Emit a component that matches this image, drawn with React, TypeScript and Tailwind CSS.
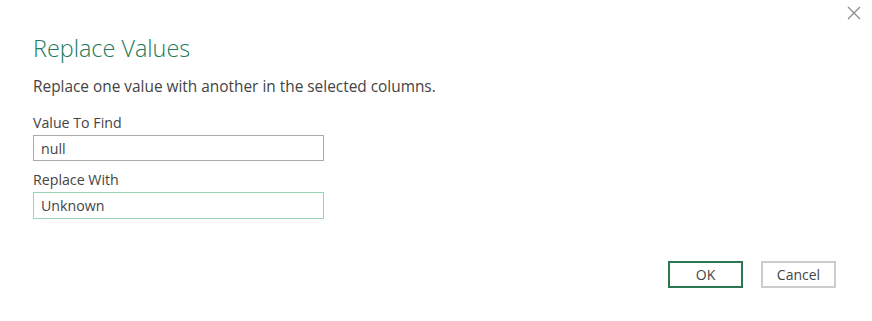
export default function App() {
  return (
    <div className="relative flex h-[321px] w-[872px] flex-col bg-white font-['Open_Sans',sans-serif] text-[#444444]">
      <button className="absolute right-[11px] top-[6px] flex h-[14px] w-[14px] items-center justify-center">
        <svg width="14" height="14" viewBox="0 0 14 14" fill="none" stroke="#8a8a8a" strokeWidth="1.2">
          <path d="M1 1 L13 13 M13 1 L1 13" />
        </svg>
      </button>

      <div className="flex flex-col pl-[33px] pt-[33px]">
        <h1 className="text-[23.4px] font-light leading-[30px] text-[#217a5a]">Replace Values</h1>
        <p className="mt-[14px] text-[15.4px] leading-[20px]">
          Replace one value with another in the selected columns.
        </p>

        <label className="mt-[16px] text-[14.2px] leading-[20px]">Value To Find</label>
        <input
          readOnly
          value="null"
          className="mt-[2px] h-[26px] w-[291px] border border-[#ababab] px-[7px] text-[14.2px] text-[#444444] outline-none"
        />
        <label className="mt-[9px] text-[14.2px] leading-[20px]">Replace With</label>
        <input
          readOnly
          value="Unknown"
          className="mt-[2px] h-[27px] w-[291px] border-[1.5px] border-[#96d6b5] px-[7px] text-[14.2px] text-[#444444] outline-none"
        />
      </div>

      <div className="mt-[42px] flex justify-end gap-[18px] pr-[36px]">
        <button className="h-[27px] w-[75px] border-2 border-[#2e7552] text-[14px] text-[#444444]">OK</button>
        <button className="h-[27px] w-[75px] border-2 border-[#cccccc] text-[14px] text-[#444444]">Cancel</button>
      </div>
    </div>
  );
}
